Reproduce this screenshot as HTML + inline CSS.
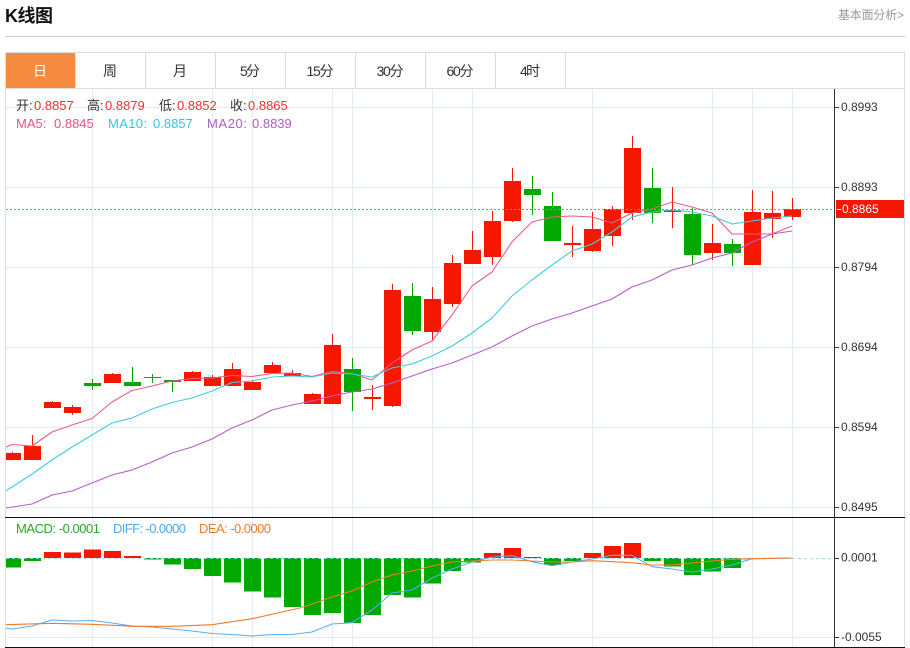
<!DOCTYPE html>
<html><head><meta charset="utf-8"><style>
html,body{margin:0;padding:0;background:#fff;width:910px;height:648px;overflow:hidden}
svg{display:block;position:absolute;left:0;top:0}
text{font-family:"Liberation Sans","Noto Sans CJK SC",sans-serif}
</style></head><body>
<svg width="910" height="648" viewBox="0 0 910 648" xmlns="http://www.w3.org/2000/svg">
<text x="5" y="22" font-size="18" font-weight="700" fill="#111" textLength="48">K线图</text>
<text x="838" y="19" font-size="12" fill="#999" textLength="66">基本面分析&gt;</text>
<g shape-rendering="crispEdges">
<rect x="5" y="36" width="900" height="1" fill="#ccc"/>
<rect x="5" y="52" width="900" height="1" fill="#ddd"/>
<rect x="5" y="88" width="900" height="1" fill="#ddd"/>
<rect x="5" y="52" width="1" height="596" fill="#ddd"/>
<rect x="904" y="52" width="1" height="596" fill="#ddd"/>
<path d="M75 53h1v35h-1zM145 53h1v35h-1zM215 53h1v35h-1zM285 53h1v35h-1zM355 53h1v35h-1zM425 53h1v35h-1zM495 53h1v35h-1zM565 53h1v35h-1z" fill="#ddd"/>
<rect x="6" y="53" width="69" height="35" fill="#f58b3e"/>
<path d="M92 89v428h1v-428zM212 89v428h1v-428zM252 89v428h1v-428zM332 89v428h1v-428zM352 89v428h1v-428zM432 89v428h1v-428zM472 89v428h1v-428zM592 89v428h1v-428zM712 89v428h1v-428zM752 89v428h1v-428zM792 89v428h1v-428zM92 518v129h1v-129zM212 518v129h1v-129zM252 518v129h1v-129zM332 518v129h1v-129zM352 518v129h1v-129zM432 518v129h1v-129zM472 518v129h1v-129zM592 518v129h1v-129zM712 518v129h1v-129zM752 518v129h1v-129zM792 518v129h1v-129z" fill="#e1ebf2"/>
<path d="M6 107h828v1H6zM6 187h828v1H6zM6 267h828v1H6zM6 347h828v1H6zM6 427h828v1H6zM6 507h828v1H6zM6 637h828v1H6z" fill="#e1ebf2"/>
</g>
<g font-size="14" fill="#333" text-anchor="middle">
<text x="40" y="76" fill="#fff">日</text><text x="110" y="76">周</text><text x="180" y="76">月</text><text x="250" y="76" textLength="20">5分</text><text x="320" y="76" textLength="27">15分</text><text x="390" y="76" textLength="27">30分</text><text x="460" y="76" textLength="27">60分</text><text x="530" y="76" textLength="20">4时</text>
</g>
<g shape-rendering="crispEdges">
<path fill="#f51700" d="M6 453h15v7H6zM12 452h1v2h-1zM24 446h17v14H24zM32 435h1v12h-1zM44 402h17v6H44zM52 401h1v2h-1zM64 407h17v6H64zM72 405h1v10h-1zM104 374h17v9h-17zM112 373h1v2h-1zM184 372h17v9h-17zM192 371h1v2h-1zM204 377h17v9h-17zM212 375h1v3h-1zM224 369h17v17h-17zM232 363h1v7h-1zM244 382h17v8h-17zM252 380h1v3h-1zM264 365h17v8h-17zM272 362h1v4h-1zM284 373h17v3h-17zM292 370h1v4h-1zM304 394h17v10h-17zM312 393h1v2h-1zM324 345h17v59h-17zM332 334h1v12h-1zM364 397h17v2h-17zM372 385h1v25h-1zM384 290h17v116h-17zM392 284h1v123h-1zM424 299h17v33h-17zM432 287h1v54h-1zM444 263h17v41h-17zM452 255h1v52h-1zM464 250h17v14h-17zM472 231h1v33h-1zM484 221h17v36h-17zM492 211h1v54h-1zM504 181h17v40h-17zM512 168h1v54h-1zM564 243h17v2h-17zM572 226h1v31h-1zM584 229h17v22h-17zM592 212h1v40h-1zM604 209h17v27h-17zM612 206h1v40h-1zM624 148h17v65h-17zM632 136h1v84h-1zM664 210h17v2h-17zM672 187h1v41h-1zM704 243h17v10h-17zM712 224h1v36h-1zM744 212h17v53h-17zM752 190h1v75h-1zM764 213h17v6h-17zM772 191h1v47h-1zM784 209h17v8h-17zM792 198h1v22h-1z"/>
<path fill="#00a800" d="M84 383h17v3H84zM92 379h1v11h-1zM124 382h17v4h-17zM132 367h1v19h-1zM144 377h17v1h-17zM152 374h1v9h-1zM164 380h17v2h-17zM172 380h1v12h-1zM344 369h17v23h-17zM352 358h1v53h-1zM404 296h17v35h-17zM412 283h1v52h-1zM524 189h17v6h-17zM532 176h1v39h-1zM544 206h17v35h-17zM552 192h1v49h-1zM644 188h17v25h-17zM652 168h1v55h-1zM684 214h17v41h-17zM692 208h1v57h-1zM724 244h17v9h-17zM732 239h1v27h-1z"/>
</g>
<g fill="none" stroke-width="1.1" stroke-linejoin="round">
<path stroke="#ee5a8c" d="M6 447L12 444.5L32 446L52 432L72 425L92 418.5L112 402L132 390.5L152 386L172 381L192 378.5L212 378L232 375.5L252 376.5L272 373.5L292 373L312 376.5L332 371.5L352 373.5L372 380L392 363L412 350L432 341L452 315L472 286L492 272L512 242L532 222L552 217L572 216L592 217L612 223L632 213L652 209L672 202L692 207L712 213L732 234L752 234L772 234L792 226"/>
<path stroke="#3fcde0" d="M6 490.7L12 487L32 474L52 460L72 447L92 435L112 423L132 418L152 409L172 402.5L192 398L212 391L232 382.5L252 381L272 377L292 376L312 377L332 373L352 374L372 377L392 368L412 364L432 356L452 346L472 333L492 318L512 296L532 280L552 265L572 251L592 244L612 232L632 217L652 212L672 210L692 212L712 216L732 224L752 221L772 218L792 216"/>
<path stroke="#b55fcb" d="M6 508L32 504L52 495L72 491L92 483L112 475L132 470L152 462L172 453L192 447L212 439L232 428L252 420L272 410L292 405L312 401L332 396L352 392L372 389L392 383L412 376L432 369L452 363L472 355L492 347L512 336L532 326L552 319L572 313L592 306L612 299L632 287L652 280L672 270L692 265L712 258L732 253L752 242L772 234L792 231"/>
</g>
<path d="M6 209.500H834" stroke="#f76a6a" stroke-width="1" stroke-dasharray="2 2" fill="none" shape-rendering="crispEdges"/>
<g shape-rendering="crispEdges">
<path fill="#00a800" d="M6 558h15v9.500H6zM24 558h17v3H24zM144 558h17v1.500h-17zM164 558h17v6.500h-17zM184 558h17v11h-17zM204 558h17v18h-17zM224 558h17v24.500h-17zM244 558h17v33.500h-17zM264 558h17v39.500h-17zM284 558h17v49h-17zM304 558h17v57h-17zM324 558h17v55h-17zM344 558h17v65h-17zM364 558h17v57h-17zM384 558h17v37h-17zM404 558h17v39.700h-17zM424 558h17v25.700h-17zM444 558h17v13h-17zM464 558h17v4.700h-17zM544 558h17v7h-17zM564 558h17v3h-17zM644 558h17v3h-17zM664 558h17v8.700h-17zM684 558h17v17h-17zM704 558h17v13.700h-17zM724 558h17v10h-17z"/>
<path fill="#f51700" d="M44 552h17v6H44zM64 552.500h17v5.500H64zM84 549.500h17v8.500H84zM104 551h17v7h-17zM124 556h17v2h-17zM484 553h17v5h-17zM504 548h17v10h-17zM524 557h17v1h-17zM584 553h17v5h-17zM604 546h17v12h-17zM624 543h17v15h-17z"/>
</g>
<path d="M6 558.500H834" stroke="#8fd3ec" stroke-width="1" stroke-dasharray="3 3" fill="none" shape-rendering="crispEdges" opacity=".8"/>
<g fill="none" stroke-width="1.1" stroke-linejoin="round">
<path stroke="#5aaef2" d="M6 628L12 629L32 626L52 620L72 621L92 620.500L112 623L132 626L152 627L172 629L192 631L212 633.500L232 634.500L252 636L272 634.500L292 634.500L312 632L332 624L352 622.700L372 610L392 593L412 590L432 578L452 569L472 562L492 557L512 555.700L532 561.700L552 565.700L572 562L592 559L612 555.300L632 555.300L652 566.700L672 569L692 572L712 569L732 565L752 558.700L792 558"/>
<path stroke="#f47a2a" d="M6 624.700L52 623.300L92 624.300L132 626.300L172 626.300L212 624.700L252 618.700L300 608L312 604L332 597L352 591L372 582L392 575L412 571L432 566L452 562L472 561L492 560L512 560L532 561L552 562L572 562L592 560.700L612 561.700L632 562.700L652 565L672 565L692 563L712 561L732 559.300L752 558.700L792 558"/>
</g>
<g shape-rendering="crispEdges">
<rect x="5" y="517" width="900" height="1" fill="#111"/>
<rect x="5" y="647" width="900" height="1" fill="#111"/>
<rect x="834" y="89" width="1" height="558" fill="#333"/>
<path d="M835 107h4v1h-4zM835 187h4v1h-4zM835 267h4v1h-4zM835 347h4v1h-4zM835 427h4v1h-4zM835 507h4v1h-4zM835 558h4v1h-4zM835 637h4v1h-4z" fill="#333"/>
<rect x="836" y="200" width="68" height="18" fill="#f51700"/>
<rect x="837" y="209" width="4" height="1" fill="#fff"/>
</g>
<g font-size="12" fill="#333">
<text x="841" y="111">0.8993</text><text x="841" y="191">0.8893</text><text x="841" y="271">0.8794</text><text x="841" y="351">0.8694</text><text x="841" y="431">0.8594</text><text x="841" y="511">0.8495</text>
<text x="841" y="561.500">0.0001</text><text x="841" y="641">-0.0055</text>
<text x="842" y="213" fill="#fff">0.8865</text>
</g>
<g font-size="13">
<text x="16" y="110" fill="#333">开:</text><text x="34" y="110" fill="#f53030">0.8857</text>
<text x="87" y="110" fill="#333">高:</text><text x="105" y="110" fill="#f53030">0.8879</text>
<text x="159" y="110" fill="#333">低:</text><text x="177" y="110" fill="#f53030">0.8852</text>
<text x="230" y="110" fill="#333">收:</text><text x="248" y="110" fill="#f53030">0.8865</text>
<text x="16" y="128" fill="#ec4f85">MA5:</text><text x="54" y="128" fill="#ec4f85">0.8845</text>
<text x="108" y="128" fill="#2fc8dd" textLength="39">MA10:</text><text x="153" y="128" fill="#2fc8dd">0.8857</text>
<text x="207" y="128" fill="#b25bc9" textLength="40">MA20:</text><text x="252" y="128" fill="#b25bc9">0.8839</text>
<text x="16" y="533" fill="#2aa52a" textLength="84">MACD: -0.0001</text>
<text x="113" y="533" fill="#4fa8f0" textLength="73">DIFF: -0.0000</text>
<text x="199" y="533" fill="#f47a2a" textLength="72">DEA: -0.0000</text>
</g>
</svg>
</body></html>
